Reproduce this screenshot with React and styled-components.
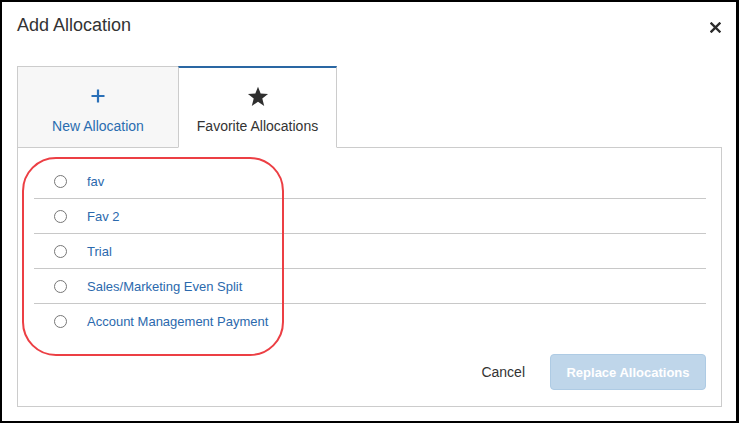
import styled, { createGlobalStyle } from "styled-components";

const GlobalStyle = createGlobalStyle`
  html, body {
    margin: 0;
    padding: 0;
    background: #fff;
  }
  body {
    font-family: "Liberation Sans", Arial, sans-serif;
  }
`;

const favorites = [
  "fav",
  "Fav 2",
  "Trial",
  "Sales/Marketing Even Split",
  "Account Management Payment",
];

export default function App() {
  return (
    <>
      <GlobalStyle />
      <Frame>
        <Header>
          <Title>Add Allocation</Title>
          <CloseButton aria-label="Close">
            <svg width="11" height="11" viewBox="0 0 11 11">
              <path d="M1.5 1.5 L9.5 9.5 M9.5 1.5 L1.5 9.5" stroke="#2b2b2b" strokeWidth="2.4" strokeLinecap="square" />
            </svg>
          </CloseButton>
        </Header>

        <Body>
          <TabBar>
            <Tab>
              <TabIcon>
                <svg width="14" height="14" viewBox="0 0 14 14">
                  <path d="M7 0.5 V13.5 M0.5 7 H13.5" stroke="#2a70b8" strokeWidth="2.2" />
                </svg>
              </TabIcon>
              <TabLabel $color="#2a6db0">New Allocation</TabLabel>
            </Tab>
            <Tab $active>
              <TabIcon>
                <svg width="22" height="21" viewBox="0 0 24 23">
                  <path
                    d="M12 0.8 L14.9 8.3 L23 8.7 L16.7 13.8 L18.8 21.8 L12 17.3 L5.2 21.8 L7.3 13.8 L1 8.7 L9.1 8.3 Z"
                    fill="#2f2f2f"
                  />
                </svg>
              </TabIcon>
              <TabLabel $color="#333">Favorite Allocations</TabLabel>
            </Tab>
          </TabBar>

          <Panel>
            <List>
              {favorites.map((name) => (
                <Row key={name}>
                  <Radio type="radio" name="favorite" />
                  <RowLabel>{name}</RowLabel>
                </Row>
              ))}
            </List>
            <Footer>
              <CancelButton>Cancel</CancelButton>
              <PrimaryButton disabled>Replace Allocations</PrimaryButton>
            </Footer>
            <Highlight />
          </Panel>
        </Body>
      </Frame>
    </>
  );
}

const Frame = styled.div`
  width: 739px;
  height: 423px;
  box-sizing: border-box;
  border: 2px solid #000;
  border-right-width: 3px;
  background: #fff;
  display: flex;
  flex-direction: column;
`;

const Header = styled.div`
  display: flex;
  align-items: center;
  justify-content: space-between;
  height: 46px;
  padding: 0 15px 0 15px;
  box-sizing: border-box;
`;

const Title = styled.h1`
  margin: 0;
  font-size: 18px;
  font-weight: 400;
  color: #333;
`;

const CloseButton = styled.button`
  border: 0;
  background: none;
  padding: 0;
  display: flex;
  cursor: pointer;
  position: relative;
  top: 2px;
`;

const Body = styled.div`
  margin: 18px 14px 0 15px;
  display: flex;
  flex-direction: column;
`;

const TabBar = styled.div`
  display: flex;
  align-items: flex-end;
  position: relative;
  z-index: 1;
  margin-bottom: -1px;
`;

const Tab = styled.div`
  box-sizing: border-box;
  width: ${({ $active }) => ($active ? "159px" : "161px")};
  height: 82px;
  display: flex;
  flex-direction: column;
  align-items: center;
  padding-top: ${({ $active }) => ($active ? "17px" : "18px")};
  background: ${({ $active }) => ($active ? "#fff" : "#f7f7f7")};
  border: 1px solid #ccc;
  border-top: ${({ $active }) => ($active ? "2px solid #2a67a3" : "1px solid #ccc")};
  border-right: ${({ $active }) => ($active ? "1px solid #ccc" : "0")};
  border-bottom: ${({ $active }) => ($active ? "1px solid #fff" : "1px solid #ccc")};
`;

const TabIcon = styled.div`
  height: 22px;
  display: flex;
  align-items: center;
  justify-content: center;
`;

const TabLabel = styled.div`
  margin-top: 11px;
  font-size: 14px;
  color: ${({ $color }) => $color};
`;

const Panel = styled.div`
  position: relative;
  border: 1px solid #ccc;
  height: 260px;
  box-sizing: border-box;
  padding: 16px 15px 0 16px;
  display: flex;
  flex-direction: column;
`;

const List = styled.div`
  display: flex;
  flex-direction: column;
`;

const Row = styled.label`
  display: flex;
  align-items: center;
  height: 34px;
  padding-left: 20px;
  gap: 20px;
  border-bottom: 1px solid #c8c8c8;
  cursor: pointer;

  &:last-child {
    border-bottom: 0;
  }
`;

const Radio = styled.input`
  appearance: none;
  -webkit-appearance: none;
  margin: 0;
  width: 13px;
  height: 13px;
  border: 1px solid #777;
  border-radius: 50%;
  background: #fff;
  box-sizing: border-box;
`;

const RowLabel = styled.span`
  font-size: 13px;
  color: #2b69ad;
`;

const Footer = styled.div`
  display: flex;
  justify-content: flex-end;
  align-items: center;
  gap: 13px;
  margin-top: 16px;
`;

const CancelButton = styled.button`
  border: 0;
  background: none;
  font-family: inherit;
  font-size: 14px;
  color: #333;
  padding: 0 12px;
  height: 36px;
  cursor: pointer;
`;

const PrimaryButton = styled.button`
  width: 156px;
  height: 36px;
  box-sizing: border-box;
  border: 1px solid #aecbe4;
  border-radius: 4px;
  background: #bfd6ea;
  color: #fff;
  font-family: inherit;
  font-size: 13px;
  font-weight: 700;
`;

const Highlight = styled.div`
  position: absolute;
  left: 4px;
  top: 9px;
  width: 262px;
  height: 199px;
  box-sizing: border-box;
  border: 2px solid #ec3f44;
  border-radius: 34px;
  pointer-events: none;
`;
